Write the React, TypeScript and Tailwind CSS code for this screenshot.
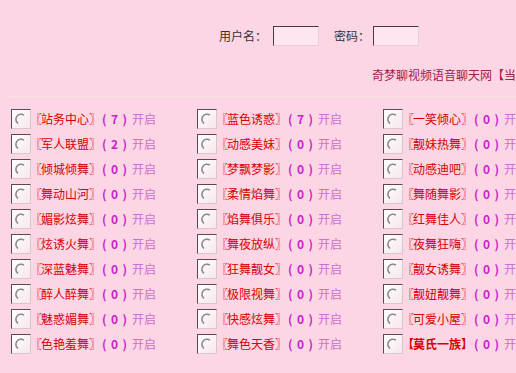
import React from "react";

type Room = { name: string; count: number; special?: boolean };

const col1: Room[] = [
  { name: "站务中心", count: 7 },
  { name: "军人联盟", count: 2 },
  { name: "倾城倾舞", count: 0 },
  { name: "舞动山河", count: 0 },
  { name: "媚影炫舞", count: 0 },
  { name: "炫诱火舞", count: 0 },
  { name: "深蓝魅舞", count: 0 },
  { name: "醉人醉舞", count: 0 },
  { name: "魅惑媚舞", count: 0 },
  { name: "色艳羞舞", count: 0 },
];
const col2: Room[] = [
  { name: "蓝色诱惑", count: 7 },
  { name: "动感美妹", count: 0 },
  { name: "梦飘梦影", count: 0 },
  { name: "柔情焰舞", count: 0 },
  { name: "焰舞俱乐", count: 0 },
  { name: "舞夜放纵", count: 0 },
  { name: "狂舞靓女", count: 0 },
  { name: "极限视舞", count: 0 },
  { name: "快感炫舞", count: 0 },
  { name: "舞色天香", count: 0 },
];
const col3: Room[] = [
  { name: "一笑倾心", count: 0 },
  { name: "靓妹热舞", count: 0 },
  { name: "动感迪吧", count: 0 },
  { name: "舞随舞影", count: 0 },
  { name: "红舞佳人", count: 0 },
  { name: "夜舞狂嗨", count: 0 },
  { name: "靓女诱舞", count: 0 },
  { name: "靓妞靓舞", count: 0 },
  { name: "可爱小屋", count: 0 },
  { name: "莫氏一族", count: 0, special: true },
];

const rows: Room[] = [];
for (let i = 0; i < 10; i++) {
  rows.push(col1[i], col2[i], col3[i]);
}

function RadioBox() {
  return (
    <div className="w-[20px] h-[20px] shrink-0 border border-t-[#5a4a50] border-l-[#5a4a50] border-r-[#d8c8cc] border-b-[#d8c8cc] bg-gradient-to-br from-white to-[#f6e6ec] flex items-center justify-center">
      <svg width="14" height="14" viewBox="0 0 14 14">
        <path d="M10 3.2 A5 5 0 1 0 4 11.5" fill="none" stroke="#8a8a8a" strokeWidth="1.6" />
      </svg>
    </div>
  );
}

function RoomItem({ room }: { room: Room }) {
  return (
    <div className="flex items-center h-[25px] whitespace-nowrap">
      <RadioBox />
      <span className={room.special ? "ml-[3px] text-[#d80000] font-bold" : "ml-[3px] text-[#d80000]"}>
        <span className="inline-block -ml-[4px] -mr-[1px]">{room.special ? "【" : "〖"}</span>
        {room.name}
        <span className="inline-block -mr-[5px]">{room.special ? "】" : "〗"}</span>
      </span>
      <span className="ml-[6px] w-[25px] inline-flex justify-between text-[#cc22cc] font-bold text-[12px]">
        <span>(</span>
        <span>{room.count}</span>
        <span>)</span>
      </span>
      <span className="ml-[5px] text-[#cc70cc]">开启</span>
    </div>
  );
}

export default function App() {
  return (
    <div
      className="w-[516px] h-[373px] overflow-hidden bg-[#fdd6e5] text-[12px] leading-none"
      style={{ fontFamily: '"Noto Sans CJK SC", "Noto Sans", sans-serif' }}
    >
      <div className="flex items-center pt-[26px] pl-[219px] h-[46px]">
        <span className="text-[#333]">用户名：</span>
        <div className="ml-[6px] w-[46px] h-[20px] border border-t-[#4a3a40] border-l-[#4a3a40] border-r-[#e8d0d8] border-b-[#e8d0d8] bg-[#fde6ef]" />
        <span className="ml-[15px] text-[#333]">密码：</span>
        <div className="ml-[3px] w-[46px] h-[20px] border border-t-[#4a3a40] border-l-[#4a3a40] border-r-[#e8d0d8] border-b-[#e8d0d8] bg-[#fde6ef]" />
      </div>
      <div className="pl-[372px] mt-[23px] whitespace-nowrap text-[#a0204a]">
        奇梦聊视频语音聊天网【当前在线】
      </div>
      <div className="ml-[10px] mt-[15px] h-px bg-[#f6e2de]" />
      <div className="grid grid-cols-[186px_186px_186px] pl-[11px] pt-[9px]">
        {rows.map((r, i) => (
          <RoomItem key={i} room={r} />
        ))}
      </div>
    </div>
  );
}
